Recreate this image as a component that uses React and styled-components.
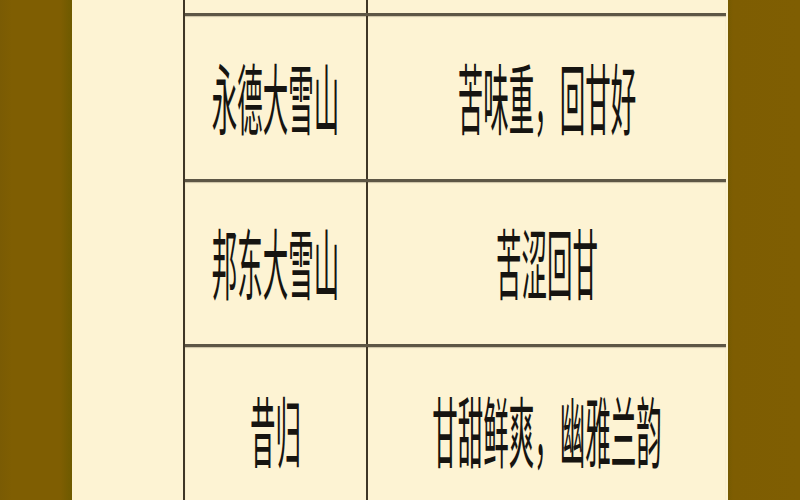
import React from "react";
import styled, { createGlobalStyle } from "styled-components";

const Global = createGlobalStyle`
  *, *::before, *::after { box-sizing: border-box; }
  html, body { margin: 0; padding: 0; overflow: hidden; }
  body { font-family: "Noto Sans CJK SC", "Noto Sans", sans-serif; }
`;

const Page = styled.div`
  display: flex;
  width: 800px;
  height: 500px;
  overflow: hidden;
`;

const Side = styled.div`
  width: 72px;
  flex: none;
  background: ${(p) =>
    p.$left
      ? "linear-gradient(90deg, #7a5b04 0px, #7f5e02 12px, #7f5e02 60px, #735b00 68px, #6e5a00 72px)"
      : "linear-gradient(90deg, #755a01 0px, #7e5d02 5px, #7f5e02 100%)"};
`;

const Sheet = styled.div`
  flex: 1;
  display: flex;
  background: #fdf3d3;
`;

const BlankColumn = styled.div`
  width: 113px;
  flex: none;
  border-right: 2px solid #3f3626;
`;

const Table = styled.div`
  flex: 1;
  display: flex;
  flex-direction: column;
  margin-right: 2px;
`;

const Row = styled.div`
  display: grid;
  grid-template-columns: 183px 1fr;
  height: ${(p) => (p.$height ? `${p.$height}px` : "auto")};
  flex: ${(p) => (p.$height ? "none" : "1")};
  border-top: ${(p) => (p.$first ? "none" : "3px solid #5d5645")};
  box-shadow: ${(p) => (p.$first ? "none" : "inset 0 1px 1px rgba(90,80,60,0.3)")};
`;

const Cell = styled.div`
  display: flex;
  align-items: center;
  justify-content: center;
  border-right: ${(p) => (p.$divider ? "2px solid #3f3626" : "none")};
  padding-bottom: 6px;
`;

const Label = styled.span`
  display: inline-block;
  font-family: "Noto Sans CJK SC", "Noto Sans", sans-serif;
  font-size: 25.5px;
  line-height: 1;
  font-weight: 400;
  color: #161410;
  white-space: nowrap;
  transform: scaleY(3.05);
  transform-origin: center;
`;

const rows = [
  { name: "永德大雪山", taste: "苦味重，回甘好", height: 166 },
  { name: "邦东大雪山", taste: "苦涩回甘", height: 165 },
  { name: "昔归", taste: "甘甜鲜爽，幽雅兰韵", height: 170 },
];

export default function App() {
  return (
    <>
      <Global />
      <Page>
        <Side $left />
        <Sheet>
          <BlankColumn />
          <Table>
            <Row $first $height={13}>
              <Cell $divider />
              <Cell />
            </Row>
            {rows.map((r) => (
              <Row key={r.name} $height={r.height}>
                <Cell $divider>
                  <Label>{r.name}</Label>
                </Cell>
                <Cell>
                  <Label>{r.taste}</Label>
                </Cell>
              </Row>
            ))}
            <Row>
              <Cell $divider />
              <Cell />
            </Row>
          </Table>
        </Sheet>
        <Side />
      </Page>
    </>
  );
}
